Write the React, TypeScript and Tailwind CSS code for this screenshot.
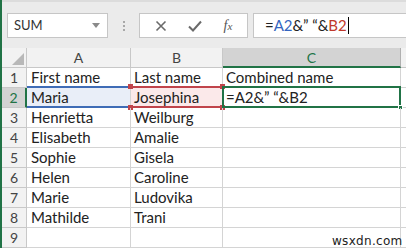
import React from 'react';

const rows: [string, string, string][] = [
  ['First name', 'Last name', 'Combined name'],
  ['Maria', 'Josephina', '=A2&” “&B2'],
  ['Henrietta', 'Weilburg', ''],
  ['Elisabeth', 'Amalie', ''],
  ['Sophie', 'Gisela', ''],
  ['Helen', 'Caroline', ''],
  ['Marie', 'Ludovika', ''],
  ['Mathilde', 'Trani', ''],
  ['', '', ''],
];

function Corner({ className }: { className: string }) {
  return <span className={`absolute w-[5px] h-[5px] ${className}`} />;
}

export default function App() {
  return (
    <div
      className="relative w-[406px] h-[248px] overflow-hidden flex bg-white text-[#222]"
      style={{ fontFamily: 'Lato, "Liberation Sans", sans-serif' }}
    >
      <div className="w-[2px] shrink-0 bg-[#217346]" />
      <div className="flex-1 flex flex-col min-w-0">
        {/* formula bar */}
        <div className="h-[48px] shrink-0 bg-[#ebebeb] border-t-2 border-[#dcdcdc] flex items-start pt-[11px] pl-[5px]">
          <div className="w-[101px] h-[25px] bg-white border border-[#c6c6c6] flex items-center justify-between pl-[6px] pr-[7px] text-[13px] text-[#333]">
            <span>SUM</span>
            <svg width="8" height="5" viewBox="0 0 8 5">
              <path d="M0 0h8L4 5z" fill="#8a8a8a" />
            </svg>
          </div>
          <div className="w-[31px] h-[25px] flex flex-col items-center justify-center gap-[2px]">
            <span className="w-[2px] h-[2px] bg-[#a8a8a8]" />
            <span className="w-[2px] h-[2px] bg-[#a8a8a8]" />
            <span className="w-[2px] h-[2px] bg-[#a8a8a8]" />
          </div>
          <div className="w-[109px] h-[25px] bg-white border border-[#c6c6c6] flex items-center justify-around px-[4px]">
            <svg width="12" height="12" viewBox="0 0 12 12">
              <path d="M1.5 1.5l9 9M10.5 1.5l-9 9" stroke="#6a6a6a" strokeWidth="1.6" />
            </svg>
            <svg width="14" height="12" viewBox="0 0 14 12">
              <path d="M1 6.5l4 4L13 1.5" stroke="#6a6a6a" strokeWidth="2" fill="none" />
            </svg>
            <span
              className="text-[14px] italic text-[#555]"
              style={{ fontFamily: '"Liberation Serif", serif' }}
            >
              f<span className="text-[11px]">x</span>
            </span>
          </div>
          <div className="flex-1 ml-[5px] h-[25px] bg-white border border-r-0 border-[#c6c6c6] flex items-center pl-[11px] text-[15px]">
            <span>=</span>
            <span className="text-[#3465c0]">A2</span>
            <span>&amp;” “&amp;</span>
            <span className="text-[#c0392b]">B2</span>
            <span className="w-px h-[17px] bg-black ml-px" />
          </div>
        </div>

        {/* column headers */}
        <div className="h-[20px] shrink-0 flex bg-[#f2f2f2] text-[14px] text-[#444]">
          <div className="w-[25px] border-r border-b border-[#c8c8c8] flex items-end justify-end p-[2px]">
            <svg width="12" height="12" viewBox="0 0 12 12">
              <path d="M12 0v12H0z" fill="#b8b8b8" />
            </svg>
          </div>
          <div className="w-[104px] border-r border-b border-[#c8c8c8] flex items-center justify-center">A</div>
          <div className="w-[92px] border-r border-b border-[#c8c8c8] flex items-center justify-center">B</div>
          <div className="w-[178px] bg-[#d3d3d3] border-r border-[#b0b0b0] border-b-2 border-b-[#217346] flex items-center justify-center text-[#217346]">
            C
          </div>
          <div className="flex-1 border-b border-[#c8c8c8]" />
        </div>

        {/* rows */}
        {rows.map(([a, b, c], i) => {
          const sel = i === 1;
          return (
            <div key={i} className="h-[20px] shrink-0 flex text-[15px]">
              <div
                className={`w-[25px] border-b border-[#c8c8c8] flex items-center justify-center text-[14px] ${
                  sel
                    ? 'bg-[#d3d3d3] border-r-2 border-r-[#217346] text-[#217346]'
                    : 'bg-[#f2f2f2] border-r border-r-[#c8c8c8] text-[#444]'
                }`}
              >
                {i + 1}
              </div>
              <div
                className={`relative w-[104px] border-r border-b border-[#d4d4d4] flex items-center pl-[4px] ${
                  sel ? 'bg-[#e9eef8]' : ''
                }`}
              >
                {a}
                {sel && (
                  <span className="absolute left-0 right-[-1px] top-[-2px] bottom-[-1px] border-y-2 border-[#3f6cb6]" />
                )}
              </div>
              <div
                className={`relative w-[92px] border-r border-b border-[#d4d4d4] flex items-center pl-[3px] ${
                  sel ? 'bg-[#fbe9ea]' : ''
                }`}
              >
                {b}
                {sel && (
                  <>
                    <span className="absolute left-[-1px] right-[-1px] top-[-2px] bottom-[-1px] border-y-2 border-[#c0444b]" />
                    <Corner className="left-[-3px] top-[-4px] bg-[#c0444b]" />
                    <Corner className="left-[-3px] bottom-[-3px] bg-[#c0444b]" />
                    <Corner className="right-[-3px] top-[-4px] bg-[#c0444b]" />
                    <Corner className="right-[-3px] bottom-[-3px] bg-[#c0444b]" />
                  </>
                )}
              </div>
              <div className="relative w-[178px] border-r border-b border-[#d4d4d4] flex items-center pl-[3px]">
                {c}
                {sel && (
                  <>
                    <span className="absolute left-[-1px] right-[-1px] top-[-2px] bottom-[-1px] border-2 border-[#217346]" />
                    <span className="absolute right-[-3px] bottom-[-3px] w-[5px] h-[5px] bg-[#217346] border border-white" />
                  </>
                )}
              </div>
              <div className="flex-1 border-b border-[#d4d4d4]" />
            </div>
          );
        })}
      </div>
      <span
        className="absolute left-[332px] top-[232px] text-[12px] text-[#222] tracking-[0.3px]"
        style={{ fontFamily: '"DejaVu Sans", sans-serif' }}
      >
        wsxdn.com
      </span>
    </div>
  );
}
